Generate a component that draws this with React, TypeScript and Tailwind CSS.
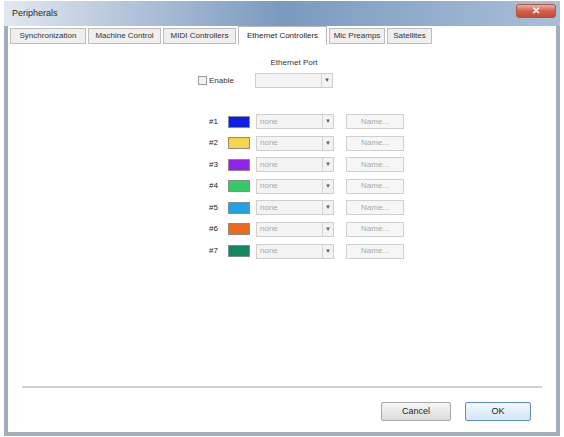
import React from 'react'

// Peripherals dialog – Ethernet Controllers tab

const tabs = [
  { label: 'Synchronization', w: 'w-[76px]' },
  { label: 'Machine Control', w: 'w-[73px]' },
  { label: 'MIDI Controllers', w: 'w-[73px]' },
  { label: 'Ethernet Controllers', w: 'w-[89px]', active: true },
  { label: 'Mic Preamps', w: 'w-[56px]' },
  { label: 'Satellites', w: 'w-[45px]' },
]

const controllers = [
  { id: '#1', color: 'bg-[#0a1ee6]' },
  { id: '#2', color: 'bg-[#f6d54a]' },
  { id: '#3', color: 'bg-[#9222e4]' },
  { id: '#4', color: 'bg-[#34cc62]' },
  { id: '#5', color: 'bg-[#22a2e6]' },
  { id: '#6', color: 'bg-[#ea6a1e]' },
  { id: '#7', color: 'bg-[#12885e]' },
]

function Combo({ value }: { value?: string }) {
  return (
    <div className="flex h-[15px] w-[78px] items-center border border-[#cfcfcf] bg-[#f3f3f3]">
      <span className="flex-1 pl-[3px] text-[8px] leading-none text-[#a8a8a8]">{value}</span>
      <span className="flex h-full w-[11px] items-center justify-center border-l border-[#d6d6d6] text-[6px] text-[#606060]">
        ▼
      </span>
    </div>
  )
}

export default function App() {
  return (
    <div
      className="relative h-[437px] w-[564px] overflow-hidden bg-white"
      style={{ fontFamily: '"Liberation Sans", Arial, sans-serif' }}
    >
      <div className="ml-[4px] flex h-[436px] w-[556px] flex-col border-x-[4px] border-b-[4px] border-[#a3aebb]">
        {/* 标题栏 */}
        <div className="relative -mx-[4px] flex h-[26px] items-center border-t border-white bg-gradient-to-r from-[#e2e8ef] via-[#7b99bf] to-[#a9bfd8] px-[8px]">
          <span className="text-[9px] text-[#2a2a2a]">Peripherals</span>
          <div className="absolute right-[4px] top-[3px] flex h-[14px] w-[40px] items-center justify-center rounded-[3px] border border-[#a8584a] bg-gradient-to-b from-[#eab0a2] via-[#d2604a] to-[#c44c34] text-[10px] font-bold leading-none text-white">
            ✕
          </div>
        </div>

        {/* 选项卡 */}
        <div className="flex items-end gap-[2px] bg-white px-[2px]">
          {tabs.map((t) =>
            t.active ? (
              <div
                key={t.label}
                className={`${t.w} flex h-[19px] items-center justify-center border-x border-t border-[#b8b8b8] bg-white text-[8px] text-[#222]`}
              >
                {t.label}
              </div>
            ) : (
              <div
                key={t.label}
                className={`${t.w} mb-[1px] flex h-[16px] items-center justify-center border border-[#bdbdbd] bg-[#efefef] text-[8px] text-[#333]`}
              >
                {t.label}
              </div>
            ),
          )}
        </div>

        {/* 内容 */}
        <div className="flex flex-1 flex-col bg-white">
          <div className="pl-[190px] pt-[12px]">
            <div className="ml-[57px] w-[78px] text-center text-[8px] text-[#333]">Ethernet Port</div>
            <div className="mt-[4px] flex items-center">
              <div className="flex w-[57px] items-center gap-[2px]">
                <span className="h-[9px] w-[9px] border border-[#9a9a9a] bg-[#f2f2f2]" />
                <span className="text-[8px] text-[#333]">Enable</span>
              </div>
              <Combo />
            </div>

            <div className="mt-[26px] flex flex-col gap-[6.6px]">
              {controllers.map((c) => (
                <div key={c.id} className="flex h-[15px] items-center">
                  <span className="w-[30px] pl-[11px] text-[8px] text-[#222]">{c.id}</span>
                  <span className={`${c.color} h-[12px] w-[22px] border border-[#8a8a8a]`} />
                  <span className="w-[6px]" />
                  <Combo value="none" />
                  <div className="ml-[12px] flex h-[15px] w-[58px] items-center justify-center border border-[#d0d0d0] bg-[#f6f6f6] text-[8px] text-[#a8a8a8]">
                    Name...
                  </div>
                </div>
              ))}
            </div>
          </div>

          <div className="flex-1" />

          <div className="mx-[14px] border-t-2 border-[#cfd1d4]" />

          <div className="flex justify-end gap-[14px] pb-[11px] pr-[25px] pt-[14px]">
            <div className="flex h-[19px] w-[70px] items-center justify-center rounded-[2px] border border-[#a8a8a8] bg-gradient-to-b from-[#f6f6f6] to-[#dcdcdc] text-[9px] text-[#222]">
              Cancel
            </div>
            <div className="flex h-[19px] w-[66px] items-center justify-center rounded-[2px] border border-[#5c8ccb] bg-gradient-to-b from-[#f2f8fd] to-[#d4e6f6] text-[9px] text-[#222]">
              OK
            </div>
          </div>
        </div>
      </div>
    </div>
  )
}
